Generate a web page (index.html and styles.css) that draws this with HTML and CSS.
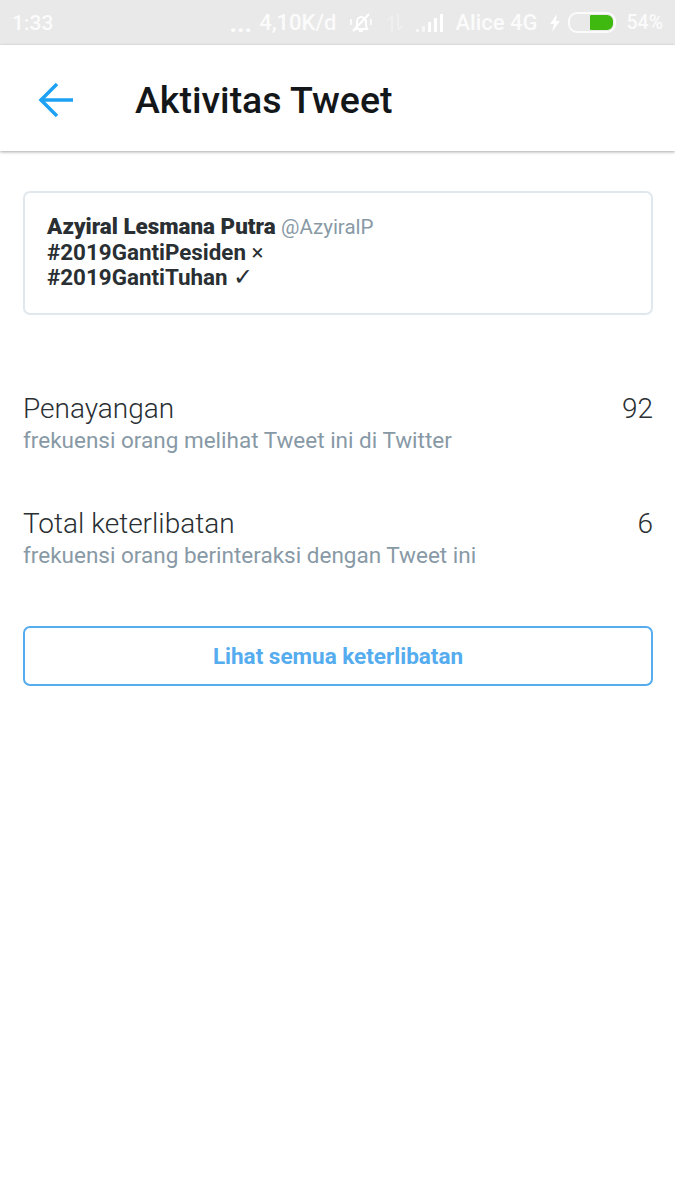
FILE: index.html
```html
<!DOCTYPE html>
<html lang="en">
<head>
    <meta charset="UTF-8">
    <title>Aktivitas Tweet</title>
    <meta name="viewport" content="width=device-width, initial-scale=1">
    <link rel="stylesheet" href="styles.css">
</head>
<body>

<div class="statusbar">
    <span class="clock">1:33</span>
    <div class="status-right">
        <span class="dots">...</span>
        <span>4,10K/d</span>
        <svg class="ico-mute" width="26" height="26" viewBox="0 0 26 26" fill="none" stroke="#fff" stroke-width="2">
            <path d="M8 19c1-2 1-5 1-7 0-3 2-5 4-5s5 2 5 5c0 3 0 5 1 7z"/>
            <path d="M11 21h4"/>
            <path d="M5 21L21 4"/>
            <path d="M3 9v6M23 9v6" stroke-width="1.5"/>
        </svg>
        <svg class="ico-updown" width="18" height="22" viewBox="0 0 18 22" fill="none" stroke="#f5f5f5" stroke-width="2">
            <path d="M6 20V4M2 8l4-4M12 2v16M16 14l-4 4"/>
        </svg>
        <svg class="ico-signal" width="28" height="18" viewBox="0 0 28 18" fill="#fff">
            <rect x="0" y="15" width="3" height="3" opacity="0.6"/>
            <rect x="6" y="12" width="3" height="6" opacity="0.6"/>
            <rect x="12" y="8" width="3" height="10"/>
            <rect x="18" y="4" width="3" height="14"/>
            <rect x="24" y="0" width="3" height="18"/>
        </svg>
        <span>Alice 4G</span>
        <svg class="ico-bolt" width="12" height="18" viewBox="0 0 12 18" fill="#fff">
            <path d="M8 0L1 10h4l-2 8 8-11H7z"/>
        </svg>
        <div class="battery"><div class="battery-fill"></div></div>
        <span class="percent">54%</span>
    </div>
</div>

<header class="topbar">
    <svg class="back" width="36" height="36" viewBox="0 0 36 36" fill="none" stroke="#1da1f2" stroke-width="3.5">
        <path d="M2 18h33"/>
        <path d="M19 2L3 18l16 16"/>
    </svg>
    <h1>Aktivitas Tweet</h1>
</header>

<main class="content">
    <section class="tweet">
        <p><b>Azyiral Lesmana Putra</b> <span class="handle">@AzyiralP</span></p>
        <p class="tweet-text">#2019GantiPesiden <span class="mark">×</span></p>
        <p class="tweet-text">#2019GantiTuhan <span class="mark mark-check">✓</span></p>
    </section>

    <section class="stats">
        <div class="stat">
            <div class="stat-head"><span>Penayangan</span><span>92</span></div>
            <div class="stat-desc">frekuensi orang melihat Tweet ini di Twitter</div>
        </div>
        <div class="stat">
            <div class="stat-head"><span>Total keterlibatan</span><span>6</span></div>
            <div class="stat-desc">frekuensi orang berinteraksi dengan Tweet ini</div>
        </div>
    </section>

    <button class="all-btn">Lihat semua keterlibatan</button>
</main>

</body>
</html>
```

FILE: styles.css
```css
body {
    font-family: Roboto, sans-serif;
    background-color: #fff;
    color: #14171a;
    margin: 0;
    padding: 0;
}
p {
    margin: 0;
}
.statusbar {
    background-color: #e9e9e9;
    height: 45px;
    display: flex;
    justify-content: space-between;
    align-items: center;
    padding: 0 12px;
    box-sizing: border-box;
    color: #fbfbfb;
    font-size: 22px;
    font-weight: 500;
}
.clock {
    font-size: 21px;
}
.status-right {
    display: flex;
    align-items: center;
    gap: 10px;
}
.dots {
    font-weight: 700;
    font-size: 26px;
    margin-right: -3px;
}
.ico-mute {
    margin-left: 2px;
}
.ico-updown {
    margin-left: 2px;
    opacity: 0.5;
}
.ico-signal {
    margin: 0 1px 0 2px;
}
.ico-bolt {
    margin-left: 2px;
}
.battery {
    width: 42px;
    height: 15px;
    border: 2px solid #fbfbfb;
    border-radius: 9px;
    margin-left: -3px;
    display: flex;
    justify-content: flex-end;
    padding: 1px;
}
.battery-fill {
    width: 23px;
    background-color: #3fb810;
    border-radius: 1px 6px 6px 1px;
}
.percent {
    font-size: 19.5px;
}
.topbar {
    height: 106px;
    box-sizing: border-box;
    padding: 4px 0 0 38px;
    display: flex;
    align-items: center;
    background-color: #fff;
    box-shadow: 0 1px 3px rgba(0,0,0,0.35);
}
.topbar h1 {
    margin: 0 0 0 61px;
    font-size: 37.5px;
    font-weight: 500;
    color: #14171a;
}
.content {
    padding: 40px 22px 0 23px;
}
.tweet {
    border: 2px solid #e1e8ed;
    border-radius: 7px;
    padding: 21px 22px 23px;
    font-size: 22.4px;
    line-height: 25px;
    font-weight: 700;
    color: #292f33;
}
.handle {
    font-size: 20.5px;
    font-weight: 400;
    color: #8899a6;
}
.mark {
    font-weight: 400;
}
.mark-check {
    font-size: 24px;
    line-height: 20px;
}
.stats {
    margin-top: 77px;
}
.stat {
    margin-bottom: 53px;
}
.stat-head {
    display: flex;
    justify-content: space-between;
    font-size: 28px;
    font-weight: 300;
    color: #292f33;
    line-height: 34px;
}
.stat-desc {
    font-size: 22.5px;
    line-height: 28px;
    color: #8899a6;
}
.all-btn {
    display: block;
    width: 100%;
    height: 60px;
    margin-top: 57px;
    background-color: #fff;
    border: 2px solid #55acee;
    border-radius: 7px;
    color: #55acee;
    font-family: Roboto, sans-serif;
    font-size: 22.5px;
    font-weight: 700;
}
```
